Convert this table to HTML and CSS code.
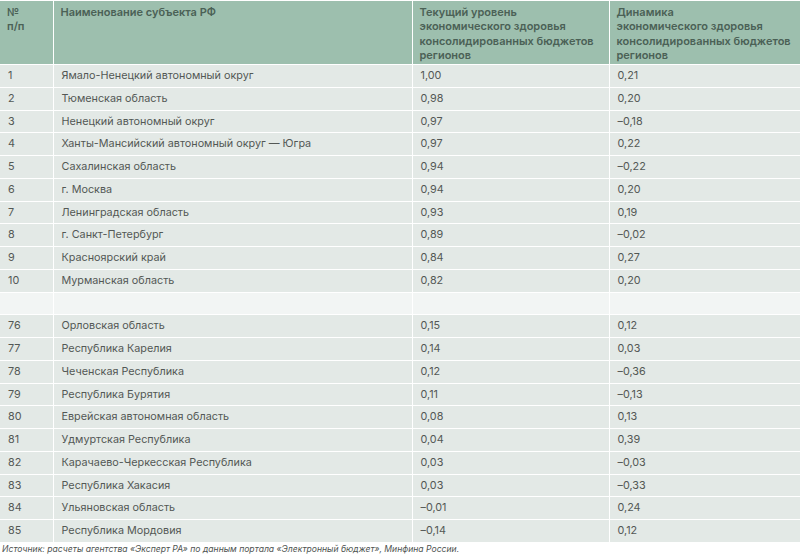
FILE: index.html
```html
<!DOCTYPE html>
<html lang="ru">
<head>
<meta charset="utf-8">
<link rel="stylesheet" href="styles.css">
</head>
<body>
<table class="rating">
  <colgroup>
    <col class="c-num"><col class="c-name"><col class="c-level"><col class="c-dyn">
  </colgroup>
  <thead>
    <tr>
      <th>№<br>п/п</th>
      <th>Наименование субъекта РФ</th>
      <th>Текущий уровень<br>экономического здоровья<br>консолидированных бюджетов<br>регионов</th>
      <th>Динамика<br>экономического здоровья<br>консолидированных бюджетов<br>регионов</th>
    </tr>
  </thead>
  <tbody>
    <tr><td>1</td><td>Ямало-Ненецкий автономный округ</td><td>1,00</td><td>0,21</td></tr>
    <tr><td>2</td><td>Тюменская область</td><td>0,98</td><td>0,20</td></tr>
    <tr><td>3</td><td>Ненецкий автономный округ</td><td>0,97</td><td>–0,18</td></tr>
    <tr><td>4</td><td>Ханты-Мансийский автономный округ — Югра</td><td>0,97</td><td>0,22</td></tr>
    <tr><td>5</td><td>Сахалинская область</td><td>0,94</td><td>–0,22</td></tr>
    <tr><td>6</td><td>г. Москва</td><td>0,94</td><td>0,20</td></tr>
    <tr><td>7</td><td>Ленинградская область</td><td>0,93</td><td>0,19</td></tr>
    <tr><td>8</td><td>г. Санкт-Петербург</td><td>0,89</td><td>–0,02</td></tr>
    <tr><td>9</td><td>Красноярский край</td><td>0,84</td><td>0,27</td></tr>
    <tr><td>10</td><td>Мурманская область</td><td>0,82</td><td>0,20</td></tr>
    <tr class="gap"><td></td><td></td><td></td><td></td></tr>
    <tr><td>76</td><td>Орловская область</td><td>0,15</td><td>0,12</td></tr>
    <tr><td>77</td><td>Республика Карелия</td><td>0,14</td><td>0,03</td></tr>
    <tr><td>78</td><td>Чеченская Республика</td><td>0,12</td><td>–0,36</td></tr>
    <tr><td>79</td><td>Республика Бурятия</td><td>0,11</td><td>–0,13</td></tr>
    <tr><td>80</td><td>Еврейская автономная область</td><td>0,08</td><td>0,13</td></tr>
    <tr><td>81</td><td>Удмуртская Республика</td><td>0,04</td><td>0,39</td></tr>
    <tr><td>82</td><td>Карачаево-Черкесская Республика</td><td>0,03</td><td>–0,03</td></tr>
    <tr><td>83</td><td>Республика Хакасия</td><td>0,03</td><td>–0,33</td></tr>
    <tr><td>84</td><td>Ульяновская область</td><td>–0,01</td><td>0,24</td></tr>
    <tr><td>85</td><td>Республика Мордовия</td><td>–0,14</td><td>0,12</td></tr>
  </tbody>
</table>
<p class="source">Источник: расчеты агентства «Эксперт РА» по данным портала «Электронный бюджет», Минфина России.</p>
</body>
</html>
```

FILE: styles.css
```css
html, body {
  margin: 0;
  padding: 0;
  background: #ffffff;
}

body {
  font-family: Inter, "Noto Sans", "Liberation Sans", sans-serif;
  width: 800px;
}

.rating {
  width: 800px;
  border-collapse: collapse;
  table-layout: fixed;
  margin-top: 1px;
}

.c-num { width: 53px; }
.c-name { width: 359px; }
.c-level { width: 197px; }
.c-dyn { width: 191px; }

.rating th,
.rating td {
  border: 1px solid #ffffff;
  text-align: left;
  vertical-align: top;
}

.rating tr > :first-child { border-left: 0; }
.rating tr > :last-child { border-right: 0; }
.rating thead th { border-top: 0; }

.rating th {
  background: #9dbfae;
  color: #4b6156;
  font-size: 11px;
  font-weight: 600;
  line-height: 14.3px;
  padding: 4px 7px 2px 7px;
  height: 56px;
}

.rating td {
  background: #e3e9e6;
  color: #535855;
  font-size: 10.8px;
  line-height: 14px;
  padding: 4px 7px 3.76px 8px;
  height: 14px;
  white-space: nowrap;
}

.rating tr.gap td {
  background: #f2f5f4;
}

.source {
  margin: 1px 0 0 2px;
  font-size: 8.6px;
  font-style: italic;
  color: #4e5350;
  line-height: 11px;
}
```
